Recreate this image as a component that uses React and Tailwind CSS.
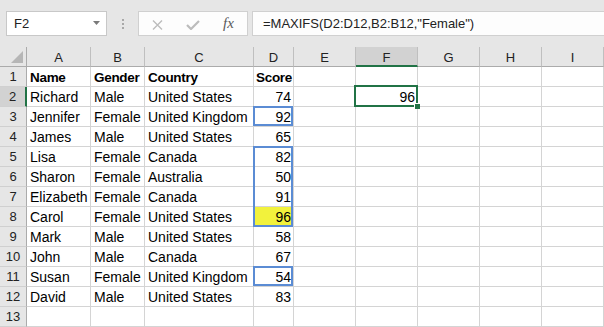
import React from "react";

const rows = [
  ["Name", "Gender", "Country", "Score"],
  ["Richard", "Male", "United States", "74"],
  ["Jennifer", "Female", "United Kingdom", "92"],
  ["James", "Male", "United States", "65"],
  ["Lisa", "Female", "Canada", "82"],
  ["Sharon", "Female", "Australia", "50"],
  ["Elizabeth", "Female", "Canada", "91"],
  ["Carol", "Female", "United States", "96"],
  ["Mark", "Male", "United States", "58"],
  ["John", "Male", "Canada", "67"],
  ["Susan", "Female", "United Kingdom", "54"],
  ["David", "Male", "United States", "83"],
  ["", "", "", ""],
];

const letters = ["A", "B", "C", "D", "E", "F", "G", "H", "I"];

const cellBase =
  "relative border-r border-b border-[#d4d4d4] leading-[19px] pt-px whitespace-nowrap text-black";

function Cell({ children, className = "", right = false, children2 }) {
  return (
    <div className={`${cellBase} ${right ? "text-right pr-[2px] pl-[3px]" : "px-[3px]"} ${className}`}>
      {children}
      {children2}
    </div>
  );
}

export default function App() {
  return (
    <div
      className="w-[604px] h-[327px] overflow-hidden bg-[#e6e6e6]"
      style={{ fontFamily: '"Liberation Sans", Arial, sans-serif' }}
    >
      {/* Formula bar */}
      <div className="flex h-[36px] pt-[11px]">
        <div className="ml-[6px] w-[101px] h-[25px] border border-[#c8c8c8] bg-white flex justify-between pl-[7px] pr-[6px]">
          <span className="pt-[2px] leading-[20px] text-[13px] text-[#222]">F2</span>
          <svg width="7" height="4" viewBox="0 0 7 4" className="mt-[9px]">
            <polygon points="0,0 7,0 3.5,4" fill="#7a7a7a" />
          </svg>
        </div>
        <div className="ml-[15px] flex flex-col gap-[2px] pt-[8px]">
          <div className="w-[2px] h-[2px] bg-[#a8a8a8]" />
          <div className="w-[2px] h-[2px] bg-[#a8a8a8]" />
          <div className="w-[2px] h-[2px] bg-[#a8a8a8]" />
        </div>
        <div className="ml-[14px] w-[110px] h-[25px] border border-[#d0d0d0] bg-[#fdfdfd] flex items-center">
          <svg width="11" height="10" viewBox="0 0 11 10" className="ml-[13px] mt-[2px]">
            <path d="M1 0.5 L10 9.5 M10 0.5 L1 9.5" stroke="#bcbcbc" strokeWidth="1.4" fill="none" />
          </svg>
          <svg width="14" height="10" viewBox="0 0 14 10" className="ml-[23px] mt-[2px]">
            <path d="M1 5 L5 9 L13 1" stroke="#bcbcbc" strokeWidth="2.2" fill="none" />
          </svg>
          <span
            className="ml-[23px] text-[15px] italic text-[#595959] leading-none"
            style={{ fontFamily: '"Liberation Serif", "Times New Roman", serif' }}
          >
            fx
          </span>
        </div>
        <div className="ml-[4px] flex-1 -mr-px h-[25px] border border-[#d0d0d0] bg-[#fdfdfd] pl-[10px] pt-[2px] leading-[20px] text-[13px] text-[#222] whitespace-nowrap">
          =MAXIFS(D2:D12,B2:B12,"Female")
        </div>
      </div>

      {/* Grid */}
      <div className="mt-[11px] grid grid-cols-[27px_64px_54px_109px_40px_62px_62px_62px_62px_62px] auto-rows-[20px]">
        {/* header row */}
        <div className="border-r border-b border-r-[#ababab] border-b-[#ababab] bg-[#e6e6e6] flex justify-end items-end pr-[3px] pb-[3px]">
          <svg width="12" height="12" viewBox="0 0 12 12">
            <polygon points="12,0 12,12 0,12" fill="#b6b6b6" />
          </svg>
        </div>
        {letters.map((l) => (
          <div
            key={l}
            className={`border-r border-r-[#bfbfbf] text-center text-[13px] leading-[19px] pt-px text-[#222] ${
              l === "F"
                ? "bg-[#d2d2d2] border-b-2 border-b-[#217346]"
                : "bg-[#e6e6e6] border-b border-b-[#ababab]"
            }`}
          >
            {l}
          </div>
        ))}

        {rows.map((r, i) => {
          const n = i + 1;
          const txt = n === 1 ? "font-bold text-[13.5px] tracking-[-0.3px]" : "text-[14px]";
          return (
            <React.Fragment key={n}>
              <div
                className={`border-b border-b-[#d0d0d0] text-center text-[13px] leading-[19px] text-[#222] ${
                  n === 2
                    ? "bg-[#d2d2d2] border-r-2 border-r-[#217346]"
                    : "bg-[#e6e6e6] border-r border-r-[#ababab]"
                }`}
              >
                {n}
              </div>
              <Cell className={`bg-white ${txt}`}>{r[0]}</Cell>
              <Cell className={`bg-white ${txt}`}>{r[1]}</Cell>
              <Cell className={`bg-white ${txt}`}>{r[2]}</Cell>
              <Cell
                right={n !== 1}
                className={`${n === 8 ? "bg-[#f2f23c]" : "bg-white"} ${txt} ${n === 1 ? "!pl-[2px]" : ""}`}
                children2={
                  n === 3 || n === 11 ? (
                    <div className="absolute -left-px -top-px right-0 bottom-0 border-2 border-[#5b8cd4] z-10" />
                  ) : n === 5 ? (
                    <div className="absolute -left-px -top-px right-0 h-[81px] border-2 border-[#5b8cd4] z-10" />
                  ) : null
                }
              >
                {r[3]}
              </Cell>
              <Cell className="bg-white" />
              <Cell
                right
                className="bg-white text-[14px]"
                children2={
                  n === 2 ? (
                    <div className="absolute -left-[2px] -top-[2px] -right-px -bottom-px border-2 border-[#217346] z-10">
                      <div className="absolute -right-[4px] -bottom-[4px] w-[6px] h-[6px] bg-[#217346] border-l border-t border-white" />
                    </div>
                  ) : null
                }
              >
                {n === 2 ? "96" : ""}
              </Cell>
              <Cell className="bg-white" />
              <Cell className="bg-white" />
              <Cell className="bg-white" />
            </React.Fragment>
          );
        })}
      </div>
    </div>
  );
}
